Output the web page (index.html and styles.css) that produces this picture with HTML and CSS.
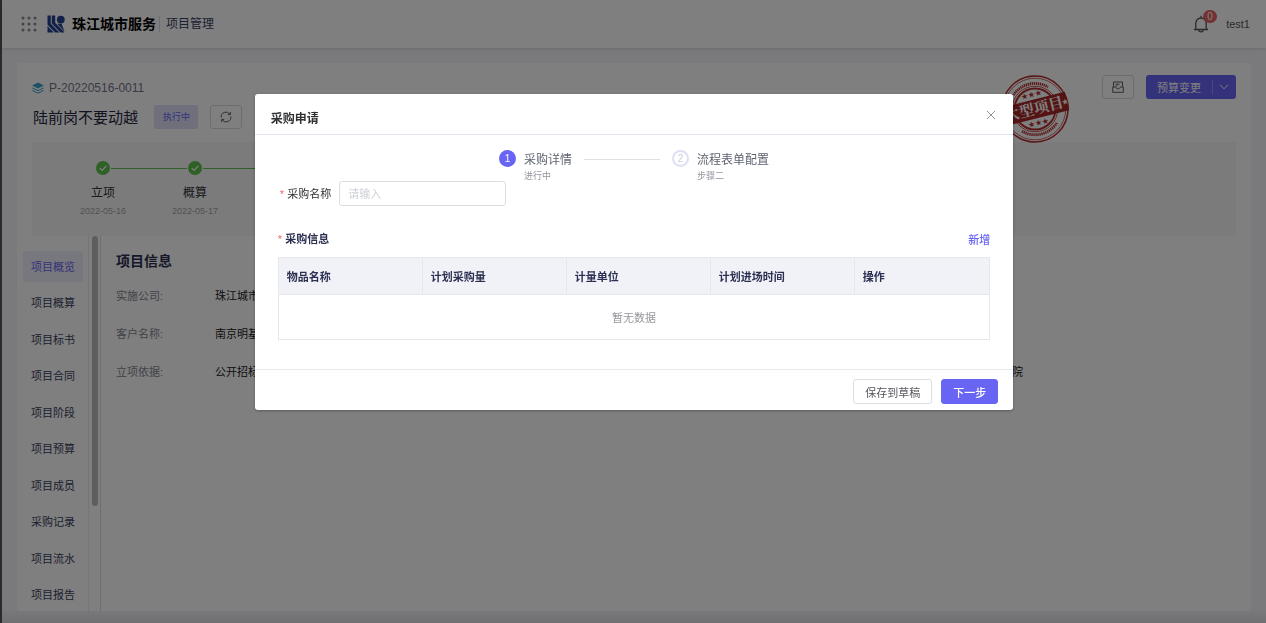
FILE: index.html
```
<!DOCTYPE html>
<html lang="zh-CN">
<head>
<meta charset="utf-8">
<meta name="viewport" content="width=device-width, initial-scale=1">
<title>项目管理</title>
<link rel="stylesheet" href="styles.css">
</head>
<body>
<div class="page">
  <header class="topbar">
    <svg class="apps" viewBox="0 0 16 16" aria-hidden="true"><g fill="#8a8b90"><circle cx="2" cy="2" r="1.500"/><circle cx="8" cy="2" r="1.500"/><circle cx="14" cy="2" r="1.500"/><circle cx="2" cy="8" r="1.500"/><circle cx="8" cy="8" r="1.500"/><circle cx="14" cy="8" r="1.500"/><circle cx="2" cy="14" r="1.500"/><circle cx="8" cy="14" r="1.500"/><circle cx="14" cy="14" r="1.500"/></g></svg>
    <svg class="logo" viewBox="0 0 18 18" aria-hidden="true"><g fill="#254391"><circle cx="13.800" cy="4.600" r="3.900"/><path d="M.5.6h3.300v8.200l8.600 8.600H8.200L.5 9.700z"/><path d="M4.800.6h3.400v7.200l9.300 9.600h-4L4.800 8.400z"/><path d="M.5 11 6.900 17.400H.5z"/><path d="M10.300 8.800h4.200l3 8z"/></g></svg>
    <strong class="brand">珠江城市服务</strong>
    <span class="module">项目管理</span>
    <div class="user">
      <button class="bell" type="button" aria-label="通知">
        <svg viewBox="0 0 16 18" fill="none" stroke="#55565a" stroke-width="1.300" aria-hidden="true"><path d="M1 14.500h14M2.800 14.500V8.200a5.200 5.200 0 0 1 10.400 0v6.300M8 .8V3M6 15.200a2 1.600 0 0 0 4 0"/></svg>
        <span class="badge">0</span>
      </button>
      <span>test1</span>
    </div>
  </header>

  <main class="card">
    <div class="card-head">
      <div class="project">
        <div class="code">
          <svg viewBox="0 0 12 12" aria-hidden="true"><path d="M6 .5 11.800 3.500 6 6.500.2 3.500z" fill="#3ba0cf"/><path d="M.3 5.800 6 8.700l5.700-2.900M.3 8.300 6 11.200l5.700-2.900" fill="none" stroke="#3ba0cf"/></svg>
          P-20220516-0011
        </div>
        <div class="name-row">
          <h1 class="name">陆前岗不要动越</h1>
          <span class="tag">执行中</span>
          <button class="icon-btn" type="button" aria-label="刷新"><svg viewBox="0 0 12 12" fill="none" stroke="#5e6066" aria-hidden="true"><path d="M1.200 6.500A4.800 4.800 0 0 1 10 3.300M10.800 5.500A4.800 4.800 0 0 1 2 8.700M10.300 1v2.600H7.800M1.700 11V8.400h2.500"/></svg></button>
        </div>
      </div>
      <div class="actions">
        <button class="icon-btn" type="button" aria-label="归档"><svg viewBox="0 0 12 12" fill="none" stroke="#5e6066" aria-hidden="true"><path d="M1.500 6V1h9v5M.7 6h3c.3 2.400 4.300 2.400 4.600 0h3v5.300H.7zM3.500 3.200h4M3.500 5h2"/></svg></button>
        <div class="split">
          <button class="split-main" type="button">预算变更</button>
          <button class="split-more" type="button" aria-label="更多"><svg viewBox="0 0 10 6" fill="none" stroke="#fff" aria-hidden="true"><path d="M1 .8 5 4.800 9 .8"/></svg></button>
        </div>
      </div>
      <svg class="stamp" viewBox="0 0 68 68" role="img" aria-label="大型项目">
        <g fill="none" stroke="#b52c2c"><circle cx="34" cy="34" r="33" stroke-width="1.500"/><circle cx="34" cy="34" r="30.800" stroke-width=".7"/><path d="M12.500 20A25.700 25.700 0 0 1 47 12M21 56.200A25.700 25.700 0 0 0 56 47.500" stroke-width="2.800" stroke-dasharray="1.300 .7"/><circle cx="34" cy="34" r="22.800" stroke-width=".8"/><circle cx="34" cy="34" r="20.500" stroke-width="1.800"/></g>
        <g transform="rotate(-14 34 34)">
          <path d="M1 24.500h66l1 9.500-1 9.500H1z" fill="#a82826"/>
          <text x="33" y="39" text-anchor="middle" class="stamp-text">大型项目</text>
          <text x="65" y="37" text-anchor="middle" class="stamp-star light">★</text>
          <text x="34" y="22" text-anchor="middle" class="stamp-star">★★★</text>
          <text x="34" y="51" text-anchor="middle" class="stamp-star">★★★</text>
        </g>
      </svg>
    </div>

    <ol class="timeline">
      <li><svg viewBox="0 0 14 14" aria-hidden="true"><circle cx="7" cy="7" r="7" fill="#5fc14b"/><path d="m3.800 7.200 2.300 2.200 4.200-4.600" fill="none" stroke="#fff" stroke-width="1.200"/></svg><b>立项</b><time>2022-05-16</time></li>
      <li><svg viewBox="0 0 14 14" aria-hidden="true"><circle cx="7" cy="7" r="7" fill="#5fc14b"/><path d="m3.800 7.200 2.300 2.200 4.200-4.600" fill="none" stroke="#fff" stroke-width="1.200"/></svg><b>概算</b><time>2022-05-17</time></li>
    </ol>

    <div class="body">
      <nav class="side">
        <a class="active" href="#">项目概览</a><a href="#">项目概算</a><a href="#">项目标书</a><a href="#">项目合同</a><a href="#">项目阶段</a><a href="#">项目预算</a><a href="#">项目成员</a><a href="#">采购记录</a><a href="#">项目流水</a><a href="#">项目报告</a>
      </nav>
      <div class="track"><div class="thumb"></div></div>
      <section class="info">
        <h2>项目信息</h2>
        <dl>
          <div><dt>实施公司:</dt><dd>珠江城市</dd></div>
          <div><dt>客户名称:</dt><dd>南京明基</dd></div>
          <div><dt>立项依据:</dt><dd>公开招标</dd><dd>院</dd></div>
        </dl>
      </section>
    </div>
  </main>
</div>

<div class="overlay">
  <section class="modal" role="dialog" aria-modal="true" aria-labelledby="dlg-title">
    <header class="modal-head">
      <h2 id="dlg-title">采购申请</h2>
      <button class="close" type="button" aria-label="关闭"><svg viewBox="0 0 10 10" fill="none" stroke="#8f9196" aria-hidden="true"><path d="m1 1 8 8M9 1 1 9"/></svg></button>
    </header>
    <div class="modal-body">
      <ol class="steps">
        <li class="step current"><i>1</i><span>采购详情<small>进行中</small></span></li>
        <li class="bar" aria-hidden="true"></li>
        <li class="step"><i>2</i><span>流程表单配置<small>步骤二</small></span></li>
      </ol>
      <div class="field">
        <label for="pname"><em>*</em> 采购名称</label>
        <input id="pname" type="text" placeholder="请输入">
      </div>
      <div class="list-head">
        <h3><em>*</em> 采购信息</h3>
        <button class="add" type="button">新增</button>
      </div>
      <table class="grid">
        <colgroup><col class="c"><col class="c"><col class="c"><col class="c"><col></colgroup>
        <thead><tr><th>物品名称</th><th>计划采购量</th><th>计量单位</th><th>计划进场时间</th><th>操作</th></tr></thead>
        <tbody><tr><td colspan="5">暂无数据</td></tr></tbody>
      </table>
    </div>
    <footer class="modal-foot">
      <button class="btn" type="button">保存到草稿</button>
      <button class="btn primary" type="button">下一步</button>
    </footer>
  </section>
</div>
</body>
</html>
```
FILE: styles.css
```
* { box-sizing: border-box; }
body, h1, h2, h3, ol, dl, dd { margin: 0; padding: 0; }
ol { list-style: none; }
body, button, input {
  font-family: "Liberation Sans", "Noto Sans CJK SC", sans-serif;
  font-size: 11px;
}
body { color: #303133; line-height: 16px; }
button { padding: 0; border: 0; background: none; cursor: pointer; }
svg { display: block; flex: none; }
a { text-decoration: none; }
em { color: #f06a6a; font-style: normal; font-weight: 400; }

.page {
  min-height: 100vh;
  display: flex;
  flex-direction: column;
  background: linear-gradient(to top, #e0e0e4, #f4f4f9 14px);
  border-left: 2px solid #55555e;
}
.topbar {
  height: 48px;
  display: flex;
  align-items: center;
  padding: 0 16px 0 19px;
  background: #fff;
  box-shadow: 0 1px 3px #0000001f;
}
.apps { width: 16px; height: 16px; }
.logo { width: 18px; height: 18px; margin-left: 10px; }
.brand { margin-left: 7px; font-size: 14px; font-weight: 700; color: #000; }
.module {
  margin-left: 3px;
  padding-left: 6px;
  border-left: 1px solid #dcdce2;
  font-size: 12px;
  color: #3a3f66;
}
.user { margin-left: auto; display: flex; align-items: center; gap: 17px; color: #55565a; }
.bell { position: relative; }
.bell svg { width: 16px; height: 18px; }
.badge {
  position: absolute;
  left: 10px;
  top: -5px;
  width: 14px;
  height: 13px;
  border-radius: 7px;
  background: #e86262;
  color: #fff;
  font-size: 10px;
  line-height: 13px;
}

.card {
  flex: 1;
  display: flex;
  flex-direction: column;
  margin: 15px 15px 12px;
  padding: 12px 15px 0;
  background: #fff;
}
.card-head { position: relative; display: flex; justify-content: space-between; }
.project { display: flex; flex-direction: column; gap: 6px; }
.code { display: flex; align-items: center; gap: 5px; height: 24px; padding-top: 1px; font-size: 12px; color: #73768a; }
.code svg { width: 12px; height: 12px; }
.name-row { display: flex; align-items: center; height: 24px; }
.name { padding: 2px 0 0 1px; font-size: 15px; font-weight: 400; color: #25283f; }
.tag {
  margin: 0 12px 0 16px;
  padding: 1px 8px 0 9px;
  border-radius: 2px;
  background: #e1e0fb;
  color: #6a66f0;
  font-size: 9px;
  line-height: 23px;
}
.icon-btn {
  width: 32px;
  height: 24px;
  display: grid;
  place-items: center;
  border: 1px solid #d7d8de;
  border-radius: 3px;
}
.icon-btn svg { width: 12px; height: 12px; }
.actions { display: flex; gap: 12px; align-items: flex-start; }
.split { display: flex; align-items: center; height: 24px; border-radius: 3px; background: #6865f5; }
.split-main { padding: 0 11px; color: #fff; }
.split-more { height: 14px; padding: 0 7px 0 6px; border-left: 1px solid #918ff8; }
.split-more svg { width: 10px; height: 6px; }
.stamp { position: absolute; right: 167px; top: 0; width: 68px; height: 68px; }
.stamp-text { font: 700 15px "Noto Serif CJK SC", "Noto Sans CJK SC", serif; fill: #fff; }
.stamp-star { font: 8px "DejaVu Sans", sans-serif; fill: #b52c2c; }
.stamp-star.light { fill: #fff; }

.timeline { display: flex; margin-top: 13px; padding: 19px 25px 17px; background: #f7f7f8; }
.timeline li { position: relative; width: 92px; height: 58px; display: flex; flex-direction: column; align-items: center; }
.timeline li::after {
  content: "";
  position: absolute;
  left: 54px;
  top: 7px;
  width: 76px;
  height: 1px;
  background: #5fc14b;
}
.timeline svg { width: 14px; height: 14px; }
.timeline b { margin-top: 10px; font-size: 12px; font-weight: 400; }
.timeline time { margin-top: 2px; font-size: 9px; color: #a2a3a8; }

.body { flex: 1; display: flex; margin-left: -9px; }
.side {
  width: 60px;
  display: flex;
  flex-direction: column;
  justify-content: space-between;
  padding: 15px 0 1px;
}
.side a { padding-top: 1px; color: #3a3f60; line-height: 30px; text-align: center; border-radius: 2px; }
.side .active { background: #efeffd; color: #6a66f0; }
.track { width: 13px; margin-left: 5px; padding-left: 3px; border-left: 1px solid #ececef; border-right: 1px solid #dcdce0; }
.thumb { width: 6px; height: 72%; border-radius: 3px; background: #bcbcbe; }
.info { flex: 1; padding: 16px 0 0 15px; }
.info h2 { font-size: 14px; font-weight: 700; line-height: 18px; color: #2c3052; }
.info dl { display: flex; flex-direction: column; gap: 22px; margin-top: 18px; }
.info dl div { display: grid; grid-template-columns: 99px 1fr 224px; }
.info dt { color: #83858f; }
.info dd { color: #222; }

.overlay {
  position: fixed;
  inset: 0;
  padding: 94px 0 0 2px;
  background: rgba(0, 0, 0, 0.5);
}
.modal {
  width: 60%;
  margin: 0 auto;
  border-radius: 3px;
  background: #fff;
  box-shadow: 0 1px 3px #0000004d;
}
.modal-head {
  display: flex;
  justify-content: space-between;
  align-items: center;
  height: 41px;
  padding: 10px 17px 0 16px;
  border-bottom: 1px solid #e2e3ec;
}
.modal-head h2 { font-size: 12px; font-weight: 700; }
.close { display: grid; align-self: start; margin-top: 6px; }
.close svg { width: 10px; height: 10px; }
.modal-body { padding: 15px 23px 29px; }
.steps { display: flex; justify-content: center; gap: 12px; height: 31px; }
.step { display: flex; align-items: flex-start; gap: 8px; font-size: 12px; color: #5f6470; line-height: 20px; }
.step i {
  width: 17px;
  height: 17px;
  border: 2px solid #dfdff3;
  border-radius: 50%;
  color: #c9c9e2;
  font-size: 10px;
  font-style: normal;
  line-height: 13px;
  text-align: center;
}
.step.current i { border-color: #6865f5; background: #6865f5; color: #fff; }
.step small { display: block; font-size: 9px; line-height: 12px; color: #92959e; }
.bar { width: 76px; height: 1px; margin-top: 9px; background: #e0e1e6; }
.field { display: flex; align-items: center; gap: 8px; padding-left: 2px; }
.field input {
  width: 167px;
  height: 25px;
  padding: 0 8px;
  border: 1px solid #dcdee6;
  border-radius: 3px;
  color: #303133;
}
.field input::placeholder { color: #cfd1d8; }
.list-head { display: flex; justify-content: space-between; align-items: center; margin: 25px 0 10px; }
.list-head h3 { font-size: 11px; font-weight: 700; color: #2c3052; }
.add { color: #6865f5; font-weight: 500; }
.grid { width: 100%; table-layout: fixed; border-collapse: collapse; }
.grid .c { width: 144px; }
.grid th, .grid td { border: 1px solid #e6e8ee; padding: 0 8px; }
.grid th { height: 37px; padding-top: 2px; background: #f1f2f8; color: #2c3052; font-weight: 700; text-align: left; }
.grid td { height: 45px; padding-top: 2px; color: #94969c; text-align: center; }
.modal-foot {
  display: flex;
  justify-content: flex-end;
  gap: 9px;
  padding: 9px 15px 6px;
  border-top: 1px solid #e8e9ee;
}
.btn { height: 25px; padding: 0 11px; border: 1px solid #dcdee6; border-radius: 3px; color: #55575e; }
.btn.primary { border-color: #6865f5; background: #6865f5; color: #fff; font-weight: 500; }
```
